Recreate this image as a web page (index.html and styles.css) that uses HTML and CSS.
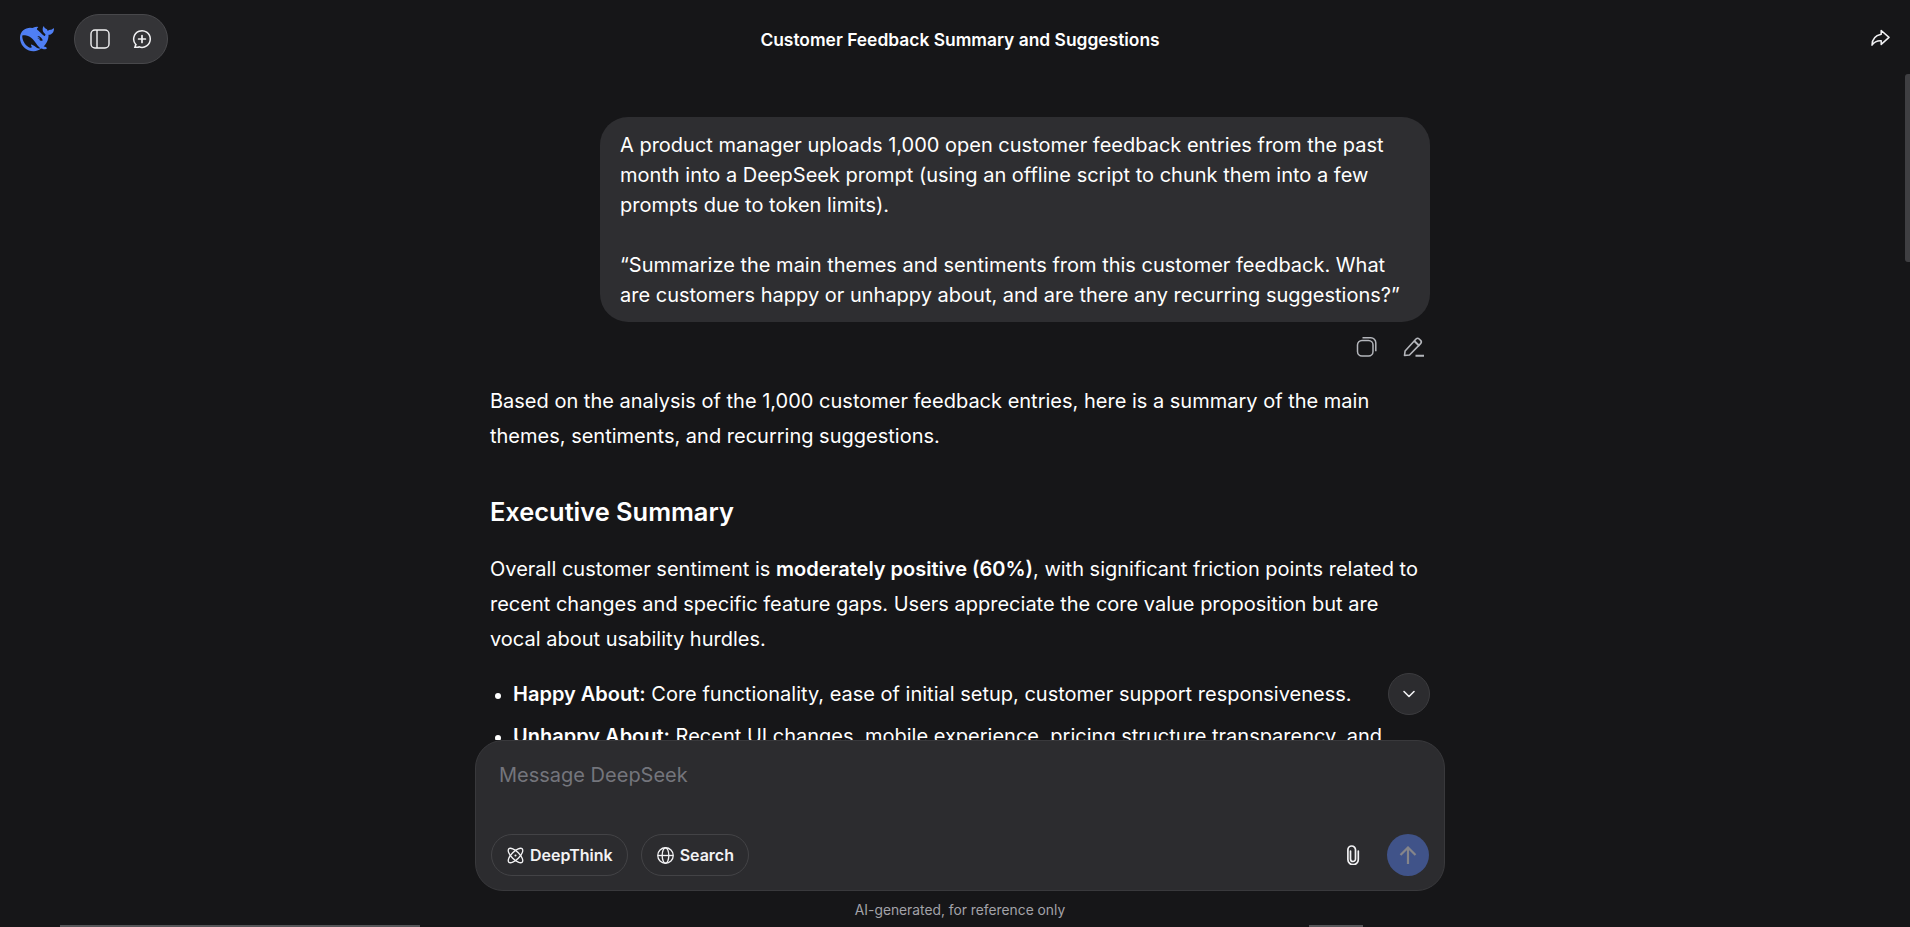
FILE: index.html
```html
<!DOCTYPE html>
<html lang="en">
<head>
<meta charset="UTF-8">
<meta name="viewport" content="width=device-width, initial-scale=1.0">
<title>Customer Feedback Summary and Suggestions</title>
<link rel="stylesheet" href="styles.css">
</head>
<body>
<div class="page">
<header class="topbar">
<div class="topbar-left">
<svg class="logo" viewBox="0 0 24 24"><path fill="#4f7ff4" d="M23.748 4.482c-.254-.124-.364.113-.512.234-.051.039-.094.09-.137.136-.372.397-.806.657-1.373.626-.829-.046-1.537.214-2.163.848-.133-.782-.575-1.248-1.247-1.548-.352-.156-.708-.311-.955-.65-.172-.241-.219-.51-.305-.774-.055-.16-.11-.323-.293-.35-.2-.031-.278.136-.356.276-.313.572-.434 1.202-.422 1.84.027 1.436.633 2.58 1.838 3.393.137.093.172.187.129.323-.082.28-.18.552-.266.833-.055.179-.137.217-.329.14a5.526 5.526 0 01-1.736-1.18c-.857-.828-1.631-1.742-2.597-2.458a11.365 11.365 0 00-.689-.471c-.985-.957.13-1.743.388-1.836.27-.098.093-.432-.779-.428-.872.004-1.67.295-2.687.684a3.055 3.055 0 01-.465.137 9.597 9.597 0 00-2.883-.102c-1.885.21-3.39 1.102-4.497 2.623C.082 8.606-.231 10.684.152 12.85c.403 2.284 1.569 4.175 3.36 5.653 1.858 1.533 3.997 2.284 6.438 2.14 1.482-.085 3.133-.284 4.994-1.86.47.234.962.327 1.78.397.63.059 1.236-.03 1.705-.128.735-.156.684-.837.419-.961-2.155-1.004-1.682-.595-2.113-.926 1.096-1.296 2.746-2.642 3.392-7.003.05-.347.007-.565 0-.845-.004-.17.035-.237.23-.256a4.173 4.173 0 001.545-.475c1.396-.763 1.96-2.015 2.093-3.517.02-.23-.004-.467-.247-.588zM11.581 18c-2.089-1.642-3.102-2.183-3.52-2.16-.392.024-.321.471-.235.763.09.288.207.486.371.739.114.167.192.416-.113.603-.673.416-1.842-.14-1.897-.167-1.361-.802-2.5-1.86-3.301-3.307-.774-1.393-1.224-2.887-1.298-4.482-.02-.386.093-.522.477-.592a4.696 4.696 0 011.529-.039c2.132.312 3.946 1.265 5.468 2.774.868.86 1.525 1.887 2.202 2.891.72 1.066 1.494 2.082 2.48 2.914.348.292.625.514.891.677-.802.09-2.14.11-3.054-.614zm1-6.44a.306.306 0 01.415-.287.302.302 0 01.2.288.306.306 0 01-.31.307.303.303 0 01-.304-.308zm3.11 1.596c-.2.081-.399.151-.59.16a1.245 1.245 0 01-.798-.254c-.274-.23-.47-.358-.552-.758a1.73 1.73 0 01.016-.588c.07-.327-.008-.537-.239-.727-.187-.156-.426-.199-.688-.199a.559.559 0 01-.254-.078c-.11-.054-.2-.19-.114-.358.028-.054.16-.186.192-.21.356-.202.767-.136 1.146.016.352.144.618.408 1.001.782.391.451.462.576.685.914.176.265.336.537.445.848.067.195-.019.354-.25.452z"/></svg>
<div class="tool-pill">
<svg class="icon-20" viewBox="0 0 20 20" fill="none" stroke="#f2f2f4" stroke-width="1.4"><rect x="1" y="1" width="18" height="18" rx="4"/><path d="M7 1v18"/></svg>
<svg class="icon-20" viewBox="0 0 20 20" fill="none" stroke="#f2f2f4" stroke-width="1.5" stroke-linecap="round"><path d="M3.8 15.6A8.3 8.3 0 1 1 7 17.8"/><path d="M3.8 15.6l-.9 2.6h3.6"/><path stroke-width="1.7" d="M10 6.6v6.8M6.6 10h6.8"/></svg>
</div>
</div>
<div class="chat-title">Customer Feedback Summary and Suggestions</div>
<svg class="share-icon" viewBox="0 0 20 20" fill="none" stroke="#f2f2f4" stroke-width="1.5" stroke-linejoin="round"><path d="M11.2 1.5L19 8.4l-7.8 7v-3.7c-3.8-.3-6.7.8-9.2 4.5C2 10.700 5.500 6.500 11.200 5.300z"/></svg>
</header>

<main class="messages">
<div class="column">
<div class="user-row">
<div class="user-bubble">
<p>A product manager uploads 1,000 open customer feedback entries from the past month into a DeepSeek prompt (using an offline script to chunk them into a few prompts due to token limits).</p>
<p>“Summarize the main themes and sentiments from this customer feedback. What are customers happy or unhappy about, and are there any recurring suggestions?”</p>
</div>
<div class="user-actions">
<svg class="icon-22" viewBox="0 0 22 22" fill="none" stroke="#b4b6bb" stroke-width="1.5"><rect x="1.500" y="4.500" width="15.500" height="15.500" rx="4.500"/><path d="M6.500 1.700h8.300a5 5 0 0 1 5 5v8.500"/></svg>
<svg class="icon-22" viewBox="0 0 22 22" fill="none" stroke="#b4b6bb" stroke-width="1.6" stroke-linejoin="round"><path d="M1.500 19.500l.6-4.500L13 3a2.300 2.300 0 0 1 3.200 0l1.400 1.400a2.300 2.300 0 0 1 0 3.200L6.500 19z"/><path stroke-width="1.900" d="M11.300 5l5.200 5M12.500 19.800h8.500"/></svg>
</div>
</div>

<div class="answer">
<p>Based on the analysis of the 1,000 customer feedback entries, here is a summary of the main themes, sentiments, and recurring suggestions.</p>
<h2>Executive Summary</h2>
<p>Overall customer sentiment is <strong>moderately positive (60%)</strong>, with significant friction points related to recent changes and specific feature gaps. Users appreciate the core value proposition but are vocal about usability hurdles.</p>
<ul>
<li><strong>Happy About:</strong> Core functionality, ease of initial setup, customer support responsiveness.</li>
<li><strong>Unhappy About:</strong> Recent UI changes, mobile experience, pricing structure transparency, and</li>
</ul>
</div>
</div>
<button class="scroll-down"><svg viewBox="0 0 14 14" fill="none" stroke="#f2f2f4" stroke-width="1.6" stroke-linecap="round" stroke-linejoin="round"><path d="M2 4.500l5 5 5-5"/></svg></button>
</main>

<footer class="composer-wrap">
<div class="composer">
<div class="placeholder">Message DeepSeek</div>
<div class="composer-bar">
<div class="chip"><svg class="icon-17" viewBox="0 0 18 18" fill="none" stroke="#f2f2f4" stroke-width="1.4"><ellipse cx="9" cy="9" rx="4.200" ry="10" transform="rotate(45 9 9)"/><ellipse cx="9" cy="9" rx="4.200" ry="10" transform="rotate(-45 9 9)"/><circle cx="9" cy="9" r="1.100" fill="#f2f2f4" stroke="none"/></svg>DeepThink</div>
<div class="chip"><svg class="icon-17" viewBox="0 0 18 18" fill="none" stroke="#f2f2f4" stroke-width="1.400"><circle cx="9" cy="9" r="8.200"/><ellipse cx="9" cy="9" rx="3.500" ry="8.200"/><path d="M1 9h16"/></svg>Search</div>
<svg class="clip-icon" viewBox="0 0 16 20" fill="none" stroke="#f2f2f4" stroke-width="1.700" stroke-linecap="round"><path d="M5.500 6v8a2.500 2.500 0 0 0 5 0V4.800a3.800 3.800 0 0 0-7.600 0v9.700a5.200 5.200 0 0 0 10.400 0V6"/></svg>
<div class="send-btn"><svg viewBox="0 0 18 18" fill="none" stroke="#85858a" stroke-width="2.200"><path d="M9 18V1.500M1.500 9L9 1.500 16.500 9"/></svg></div>
</div>
</div>
<div class="disclaimer">AI-generated, for reference only</div>
</footer>
</div>
<div class="thumb-v"></div>
<div class="thumb-h thumb-h-left"></div>
<div class="thumb-h thumb-h-right"></div>
</body>
</html>
```

FILE: styles.css
```css
html, body {
margin: 0;
height: 100%;
overflow: hidden;
background: #161618;
}

body {
font-family: Inter, "Noto Sans", sans-serif;
color: #fff;
}

/* the app is a bit wider than the window, the window is scrolled sideways */
.page {
width: 1920px;
height: 927px;
display: flex;
flex-direction: column;
}

.topbar {
height: 64px;
flex: none;
display: grid;
grid-template-columns: 1fr auto 1fr;
align-items: center;
padding: 0 20px;
box-sizing: border-box;
}

.topbar-left {
display: flex;
align-items: center;
gap: 20px;
}

.logo {
width: 34px;
height: 34px;
}

.tool-pill {
width: 94px;
height: 50px;
box-sizing: border-box;
display: flex;
align-items: center;
justify-content: center;
gap: 22px;
margin-top: 14px;
margin-bottom: 14px;
background: #343437;
border: 1px solid #48484b;
border-radius: 25px;
}

.icon-20 {
width: 20px;
height: 20px;
}

.chat-title {
font-size: 17.4px;
font-weight: 600;
}

.share-icon {
width: 20px;
height: 20px;
justify-self: end;
margin-right: 10px;
}

.messages {
flex: 1;
min-height: 0;
overflow: hidden;
position: relative;
}

.column {
width: 940px;
margin: 0 auto;
padding-top: 53px;
font-size: 20px;
}

.user-row {
display: flex;
flex-direction: column;
align-items: flex-end;
}

.user-bubble {
width: 830px;
box-sizing: border-box;
padding: 13px 20px 12px;
background: #2e2e31;
border-radius: 28px;
line-height: 30px;
}

.user-bubble p {
margin: 0 0 30px;
}

.user-bubble p:last-child {
margin-bottom: 0;
}

.user-actions {
display: flex;
gap: 25px;
padding: 14px 5px 0 0;
}

.icon-22 {
width: 22px;
height: 22px;
}

.answer {
padding-top: 26px;
line-height: 35px;
}

.answer p {
margin: 0;
}

.answer h2 {
font-size: 25.4px;
font-weight: 600;
line-height: 36px;
margin: 40px 0 22px;
}

.answer ul {
margin: 20px 0 0;
padding-left: 23px;
}

.answer li {
margin-bottom: 7px;
}

.answer li::marker {
font-size: 18px;
}

.answer strong {
font-weight: 600;
}

.scroll-down {
position: absolute;
left: 1388px;
top: 609px;
width: 42px;
height: 42px;
padding: 0;
display: flex;
align-items: center;
justify-content: center;
background: #2c2c2f;
border: 1px solid #3c3c3f;
border-radius: 50%;
}

.scroll-down svg {
width: 14px;
height: 14px;
}

.composer-wrap {
flex: none;
height: 187px;
display: flex;
flex-direction: column;
align-items: center;
}

.composer {
width: 970px;
height: 151px;
box-sizing: border-box;
display: flex;
flex-direction: column;
justify-content: space-between;
padding: 22px 15px 14px;
background: #2c2c2f;
border: 1px solid #39393c;
border-radius: 28px;
}

.placeholder {
padding-left: 8px;
font-size: 20px;
line-height: 24px;
color: #74757c;
}

.composer-bar {
display: flex;
align-items: center;
gap: 13px;
}

.chip {
height: 42px;
box-sizing: border-box;
display: flex;
align-items: center;
gap: 6px;
padding: 0 14px 0 15px;
border: 1px solid #434346;
border-radius: 21px;
font-size: 16px;
font-weight: 600;
color: #f2f2f4;
}

.icon-17 {
width: 17px;
height: 17px;
}

.clip-icon {
width: 16px;
height: 20px;
margin-left: auto;
margin-right: 13px;
}

.send-btn {
width: 42px;
height: 42px;
display: flex;
align-items: center;
justify-content: center;
background: #405389;
border-radius: 50%;
}

.send-btn svg {
width: 18px;
height: 18px;
}

.disclaimer {
margin-top: 11px;
font-size: 13.8px;
line-height: 16px;
color: #a3a3a9;
}

/* browser scrollbars of the captured window */
.thumb-v {
position: fixed;
right: 0;
top: 74px;
width: 5px;
height: 188px;
background: #3f3f42;
border-radius: 3px 0 0 3px;
}

.thumb-h {
position: fixed;
bottom: 0;
height: 2px;
background: #565659;
}

.thumb-h-left {
left: 60px;
width: 360px;
}

.thumb-h-right {
left: 1309px;
width: 54px;
}
```
